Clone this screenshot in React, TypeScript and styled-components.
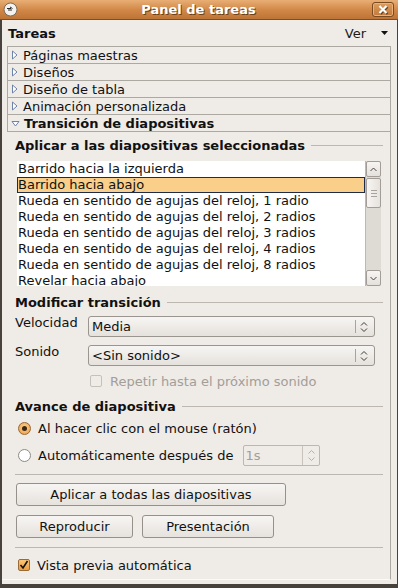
import styled, { createGlobalStyle, css } from "styled-components";

const GlobalStyle = createGlobalStyle`
  html, body {
    margin: 0;
    padding: 0;
  }
  body {
    background: #47423c;
    font-family: "DejaVu Sans", "Liberation Sans", sans-serif;
    font-size: 13px;
    color: #111;
  }
`;

const Frame = styled.div`
  width: 398px;
  height: 588px;
  box-sizing: border-box;
  display: flex;
  flex-direction: column;
  background: #47423c;
  overflow: hidden;
`;

const TitleBar = styled.div`
  flex: none;
  height: 20px;
  box-sizing: border-box;
  display: grid;
  grid-template-columns: 1fr auto 1fr;
  align-items: center;
  padding: 0 4px 0 3px;
  background: linear-gradient(#e8ae74, #d08645 55%, #be7435);
  border-bottom: 1px solid #7e4d22;
`;

const TitleText = styled.div`
  font-weight: bold;
  font-size: 13px;
  color: #fff;
  text-shadow: 1px 1px 0 #6a4019;
  white-space: nowrap;
`;

const CloseButton = styled.div`
  justify-self: end;
  width: 22px;
  height: 15px;
  box-sizing: border-box;
  display: flex;
  align-items: center;
  justify-content: center;
  border: 1px solid #7a4a20;
  border-radius: 3px;
  box-shadow: inset 0 0 0 1px #e8b27c;
  background: linear-gradient(#dc9d5e, #c27939);
`;

const Body = styled.div`
  flex: 1;
  min-height: 0;
  display: flex;
  flex-direction: column;
  margin: 0 1px 4px 2px;
  background: #efebe7;
`;

const PaneHeader = styled.div`
  flex: none;
  height: 26px;
  display: flex;
  align-items: center;
  justify-content: space-between;
  padding: 0 9px 0 6px;
`;

const Bold = styled.span`
  font-weight: bold;
`;

const ViewMenu = styled.div`
  display: flex;
  align-items: center;
  gap: 15px;
  color: #1a1a1a;
`;

const Sections = styled.div`
  flex: none;
  margin: 0 6px 0 5px;
  border: 1px solid #aca8a2;
  border-bottom: none;
`;

const SectionRow = styled.div<{ $open?: boolean }>`
  height: 17px;
  box-sizing: border-box;
  display: flex;
  align-items: center;
  gap: 5px;
  padding-left: 3px;
  border-bottom: 1px solid #aca8a2;
  white-space: nowrap;
  ${(p) =>
    p.$open &&
    css`
      font-weight: bold;
      gap: 4px;
    `}
`;

const Pane = styled.div`
  flex: 1;
  min-height: 0;
  display: flex;
  flex-direction: column;
  margin: 0 6px 4px 0;
  padding: 0 7px 0 13px;
  border-right: 1px solid #aca8a2;
  border-bottom: 1px solid #fbfaf9;
`;

const Heading = styled.div<{ $top: number }>`
  margin-top: ${(p) => p.$top}px;
  height: 16px;
  display: flex;
  align-items: center;
  font-weight: bold;
  white-space: nowrap;

  &::after {
    content: "";
    flex: 1;
    margin-left: 6px;
    border-top: 1px solid #bcb7b0;
  }
`;

const ListBox = styled.div`
  margin: 8px 2px 0 2px;
  height: 125px;
  display: flex;
  background: #fff;
`;

const ListItems = styled.div`
  flex: 1;
  overflow: hidden;
`;

const ListItem = styled.div<{ $selected?: boolean }>`
  height: 16px;
  box-sizing: border-box;
  line-height: 16px;
  padding-left: 1px;
  white-space: nowrap;
  ${(p) =>
    p.$selected &&
    css`
      background: #f9cf8a;
      border: 1px solid #1f2c48;
      line-height: 14px;
      padding-left: 0;
    `}
`;

const ScrollBar = styled.div`
  width: 16px;
  display: flex;
  flex-direction: column;
  background: #dedad4;
  border-left: 1px solid #bdb8b1;
  box-sizing: border-box;
`;

const ScrollButton = styled.div`
  flex: none;
  height: 16px;
  box-sizing: border-box;
  display: flex;
  align-items: center;
  justify-content: center;
  border: 1px solid #a29d96;
  border-radius: 2px;
  background: linear-gradient(#f7f5f3, #e4e0db);
`;

const Trough = styled.div`
  flex: 1;
  padding-top: 1px;
`;

const Thumb = styled.div`
  height: 30px;
  box-sizing: border-box;
  display: flex;
  align-items: center;
  justify-content: center;
  border: 1px solid #a29d96;
  border-radius: 2px;
  background: linear-gradient(90deg, #f7f5f3, #e6e2dd);
`;

const Field = styled.div<{ $top: number }>`
  margin-top: ${(p) => p.$top}px;
  display: flex;
  align-items: flex-start;
  padding-right: 8px;
`;

const FieldLabel = styled.div`
  width: 73px;
  flex: none;
  line-height: 14px;
`;

const Combo = styled.div`
  flex: 1;
  height: 21px;
  box-sizing: border-box;
  display: flex;
  align-items: center;
  padding: 0 6px 0 3px;
  border: 1px solid #9a958e;
  border-radius: 3px;
  background: linear-gradient(#f7f5f3, #e5e1dc);
`;

const ComboText = styled.span`
  flex: 1;
`;

const ComboArrows = styled.div`
  display: flex;
  align-items: center;
  gap: 4px;
  height: 13px;

  &::before {
    content: "";
    align-self: stretch;
    border-left: 1px solid #a8a39c;
  }
`;

const CheckRow = styled.div<{ $top: number; $indent?: number; $disabled?: boolean }>`
  margin-top: ${(p) => p.$top}px;
  padding-left: ${(p) => p.$indent ?? 3}px;
  display: flex;
  align-items: center;
  gap: ${(p) => (p.$disabled ? 8 : 7)}px;
  height: 14px;
  white-space: nowrap;
  color: ${(p) => (p.$disabled ? "#a29e98" : "inherit")};
`;

const CheckBox = styled.div<{ $checked?: boolean; $disabled?: boolean }>`
  width: 12px;
  height: 12px;
  box-sizing: border-box;
  flex: none;
  display: flex;
  align-items: center;
  justify-content: center;
  border-radius: 2px;
  border: 1px solid ${(p) => (p.$disabled ? "#c4c0ba" : "#9a6b34")};
  background: ${(p) =>
    p.$checked ? "linear-gradient(#fbc676, #ee9d3f)" : "#efece8"};
`;

const RadioRow = styled.div<{ $top: number }>`
  margin-top: ${(p) => p.$top}px;
  padding-left: 3px;
  display: flex;
  align-items: center;
  gap: 7px;
  white-space: nowrap;
  min-height: 16px;
`;

const Radio = styled.div<{ $checked?: boolean }>`
  width: 13px;
  height: 13px;
  box-sizing: border-box;
  flex: none;
  border-radius: 50%;
  display: flex;
  align-items: center;
  justify-content: center;
  border: 1px solid ${(p) => (p.$checked ? "#9a6630" : "#8f8a84")};
  background: ${(p) =>
    p.$checked ? "radial-gradient(circle at 50% 40%, #fcd193, #ef9c3e)" : "#fff"};

  &::after {
    content: "";
    display: ${(p) => (p.$checked ? "block" : "none")};
    width: 5px;
    height: 5px;
    border-radius: 50%;
    background: #3a2a18;
  }
`;

const SpinBox = styled.div`
  margin-left: 3px;
  width: 77px;
  height: 21px;
  box-sizing: border-box;
  display: flex;
  border: 1px solid #bcb7b0;
  border-radius: 2px;
  background: #efebe7;
  color: #a29e98;
`;

const SpinText = styled.span`
  flex: 1;
  padding-left: 1px;
  line-height: 19px;
`;

const SpinButtons = styled.div`
  width: 16px;
  display: flex;
  flex-direction: column;
  align-items: center;
  justify-content: center;
  gap: 3px;
  border-left: 1px solid #c8c3bc;
`;

const Separator = styled.div<{ $top: number }>`
  margin-top: ${(p) => p.$top}px;
  border-top: 1px solid #bcb7b0;
`;

const ButtonRow = styled.div<{ $top: number }>`
  margin-top: ${(p) => p.$top}px;
  padding-left: 1px;
  display: flex;
  gap: 9px;
`;

const Button = styled.div<{ $width: number }>`
  width: ${(p) => p.$width}px;
  height: 23px;
  box-sizing: border-box;
  display: flex;
  align-items: center;
  justify-content: center;
  border: 1px solid #96908a;
  border-radius: 3px;
  background: linear-gradient(#f7f5f3, #e6e2dd);
  white-space: nowrap;
`;

const Arrow = ({ open }: { open?: boolean }) =>
  open ? (
    <svg width="9" height="7" viewBox="0 0 9 7">
      <path d="M1 1.5 H8 L4.5 6 Z" fill="#fff" stroke="#6d84a8" strokeWidth="1" />
    </svg>
  ) : (
    <svg width="7" height="10" viewBox="0 0 7 10">
      <path d="M1.5 1 V9 L6 5 Z" fill="#fff" stroke="#6d84a8" strokeWidth="1" />
    </svg>
  );

const UpDown = ({ color = "#3c3a37" }: { color?: string }) => (
  <svg width="8" height="12" viewBox="0 0 8 12">
    <path d="M1 4.5 L4 1.5 L7 4.5 M1 7.5 L4 10.5 L7 7.5" fill="none" stroke={color} strokeWidth="1" />
  </svg>
);

const Chevron = ({ up }: { up?: boolean }) => (
  <svg width="7" height="5" viewBox="0 0 7 5">
    <path d={up ? "M0.5 4 L3.5 1 L6.5 4" : "M0.5 1 L3.5 4 L6.5 1"} fill="none" stroke="#4a4744" strokeWidth="1" />
  </svg>
);

const sections = [
  "Páginas maestras",
  "Diseños",
  "Diseño de tabla",
  "Animación personalizada",
];

const transitions = [
  "Barrido hacia la izquierda",
  "Barrido hacia abajo",
  "Rueda en sentido de agujas del reloj, 1 radio",
  "Rueda en sentido de agujas del reloj, 2 radios",
  "Rueda en sentido de agujas del reloj, 3 radios",
  "Rueda en sentido de agujas del reloj, 4 radios",
  "Rueda en sentido de agujas del reloj, 8 radios",
  "Revelar hacia abajo",
];

export default function App() {
  return (
    <>
      <GlobalStyle />
      <Frame>
        <TitleBar>
          <svg width="15" height="15" viewBox="0 0 15 15">
            <circle cx="7.5" cy="7.5" r="6.5" fill="#f4f2ee" stroke="#7d6a55" strokeWidth="1" />
            <path d="M4 6.5 H8 M5 8 H9 M7 5 L9.5 6.5" stroke="#2c2a28" strokeWidth="1" fill="none" />
          </svg>
          <TitleText>Panel de tareas</TitleText>
          <CloseButton>
            <svg width="11" height="10" viewBox="0 0 11 10">
              <path d="M2.5 2 L9.5 9 M9.5 2 L2.5 9" stroke="#6a4019" strokeWidth="2.2" />
              <path d="M1.5 1 L8.5 8 M8.5 1 L1.5 8" stroke="#fff" strokeWidth="2.2" />
            </svg>
          </CloseButton>
        </TitleBar>

        <Body>
          <PaneHeader>
            <Bold>Tareas</Bold>
            <ViewMenu>
              <span>Ver</span>
              <svg width="7" height="4" viewBox="0 0 7 4">
                <path d="M0 0 H7 L3.5 4 Z" fill="#111" />
              </svg>
            </ViewMenu>
          </PaneHeader>

          <Sections>
            {sections.map((s) => (
              <SectionRow key={s}>
                <Arrow />
                <span>{s}</span>
              </SectionRow>
            ))}
            <SectionRow $open>
              <Arrow open />
              <span>Transición de diapositivas</span>
            </SectionRow>
          </Sections>

          <Pane>
            <Heading $top={5}>Aplicar a las diapositivas seleccionadas</Heading>
            <ListBox>
              <ListItems>
                {transitions.map((t, i) => (
                  <ListItem key={t} $selected={i === 1}>
                    {t}
                  </ListItem>
                ))}
              </ListItems>
              <ScrollBar>
                <ScrollButton>
                  <Chevron up />
                </ScrollButton>
                <Trough>
                  <Thumb>
                    <svg width="6" height="7" viewBox="0 0 6 7">
                      <path d="M0 0.5 H6 M0 3.5 H6 M0 6.5 H6" stroke="#a8a39c" strokeWidth="1" />
                    </svg>
                  </Thumb>
                </Trough>
                <ScrollButton>
                  <Chevron />
                </ScrollButton>
              </ScrollBar>
            </ListBox>

            <Heading $top={8}>Modificar transición</Heading>
            <Field $top={6}>
              <FieldLabel>Velocidad</FieldLabel>
              <Combo>
                <ComboText>Media</ComboText>
                <ComboArrows>
                  <UpDown />
                </ComboArrows>
              </Combo>
            </Field>
            <Field $top={8}>
              <FieldLabel>Sonido</FieldLabel>
              <Combo>
                <ComboText>&lt;Sin sonido&gt;</ComboText>
                <ComboArrows>
                  <UpDown />
                </ComboArrows>
              </Combo>
            </Field>
            <CheckRow $top={8} $indent={75} $disabled>
              <CheckBox $disabled />
              <span>Repetir hasta el próximo sonido</span>
            </CheckRow>

            <Heading $top={10}>Avance de diapositiva</Heading>
            <RadioRow $top={6}>
              <Radio $checked />
              <span>Al hacer clic con el mouse (ratón)</span>
            </RadioRow>
            <RadioRow $top={9}>
              <Radio />
              <span>Automáticamente después de</span>
              <SpinBox>
                <SpinText>1s</SpinText>
                <SpinButtons>
                  <svg width="7" height="4" viewBox="0 0 7 4">
                    <path d="M0.5 3.5 L3.5 0.5 L6.5 3.5" fill="none" stroke="#b5b0a9" />
                  </svg>
                  <svg width="7" height="4" viewBox="0 0 7 4">
                    <path d="M0.5 0.5 L3.5 3.5 L6.5 0.5" fill="none" stroke="#b5b0a9" />
                  </svg>
                </SpinButtons>
              </SpinBox>
            </RadioRow>

            <Separator $top={8} />
            <ButtonRow $top={8}>
              <Button $width={270}>Aplicar a todas las diapositivas</Button>
            </ButtonRow>
            <ButtonRow $top={9}>
              <Button $width={117}>Reproducir</Button>
              <Button $width={132}>Presentación</Button>
            </ButtonRow>
            <Separator $top={9} />
            <CheckRow $top={10}>
              <CheckBox $checked>
                <svg width="10" height="10" viewBox="0 0 10 10">
                  <path d="M1.5 5 L4 8 L8.5 1" fill="none" stroke="#111" strokeWidth="1.6" />
                </svg>
              </CheckBox>
              <span>Vista previa automática</span>
            </CheckRow>
          </Pane>
        </Body>
      </Frame>
    </>
  );
}
